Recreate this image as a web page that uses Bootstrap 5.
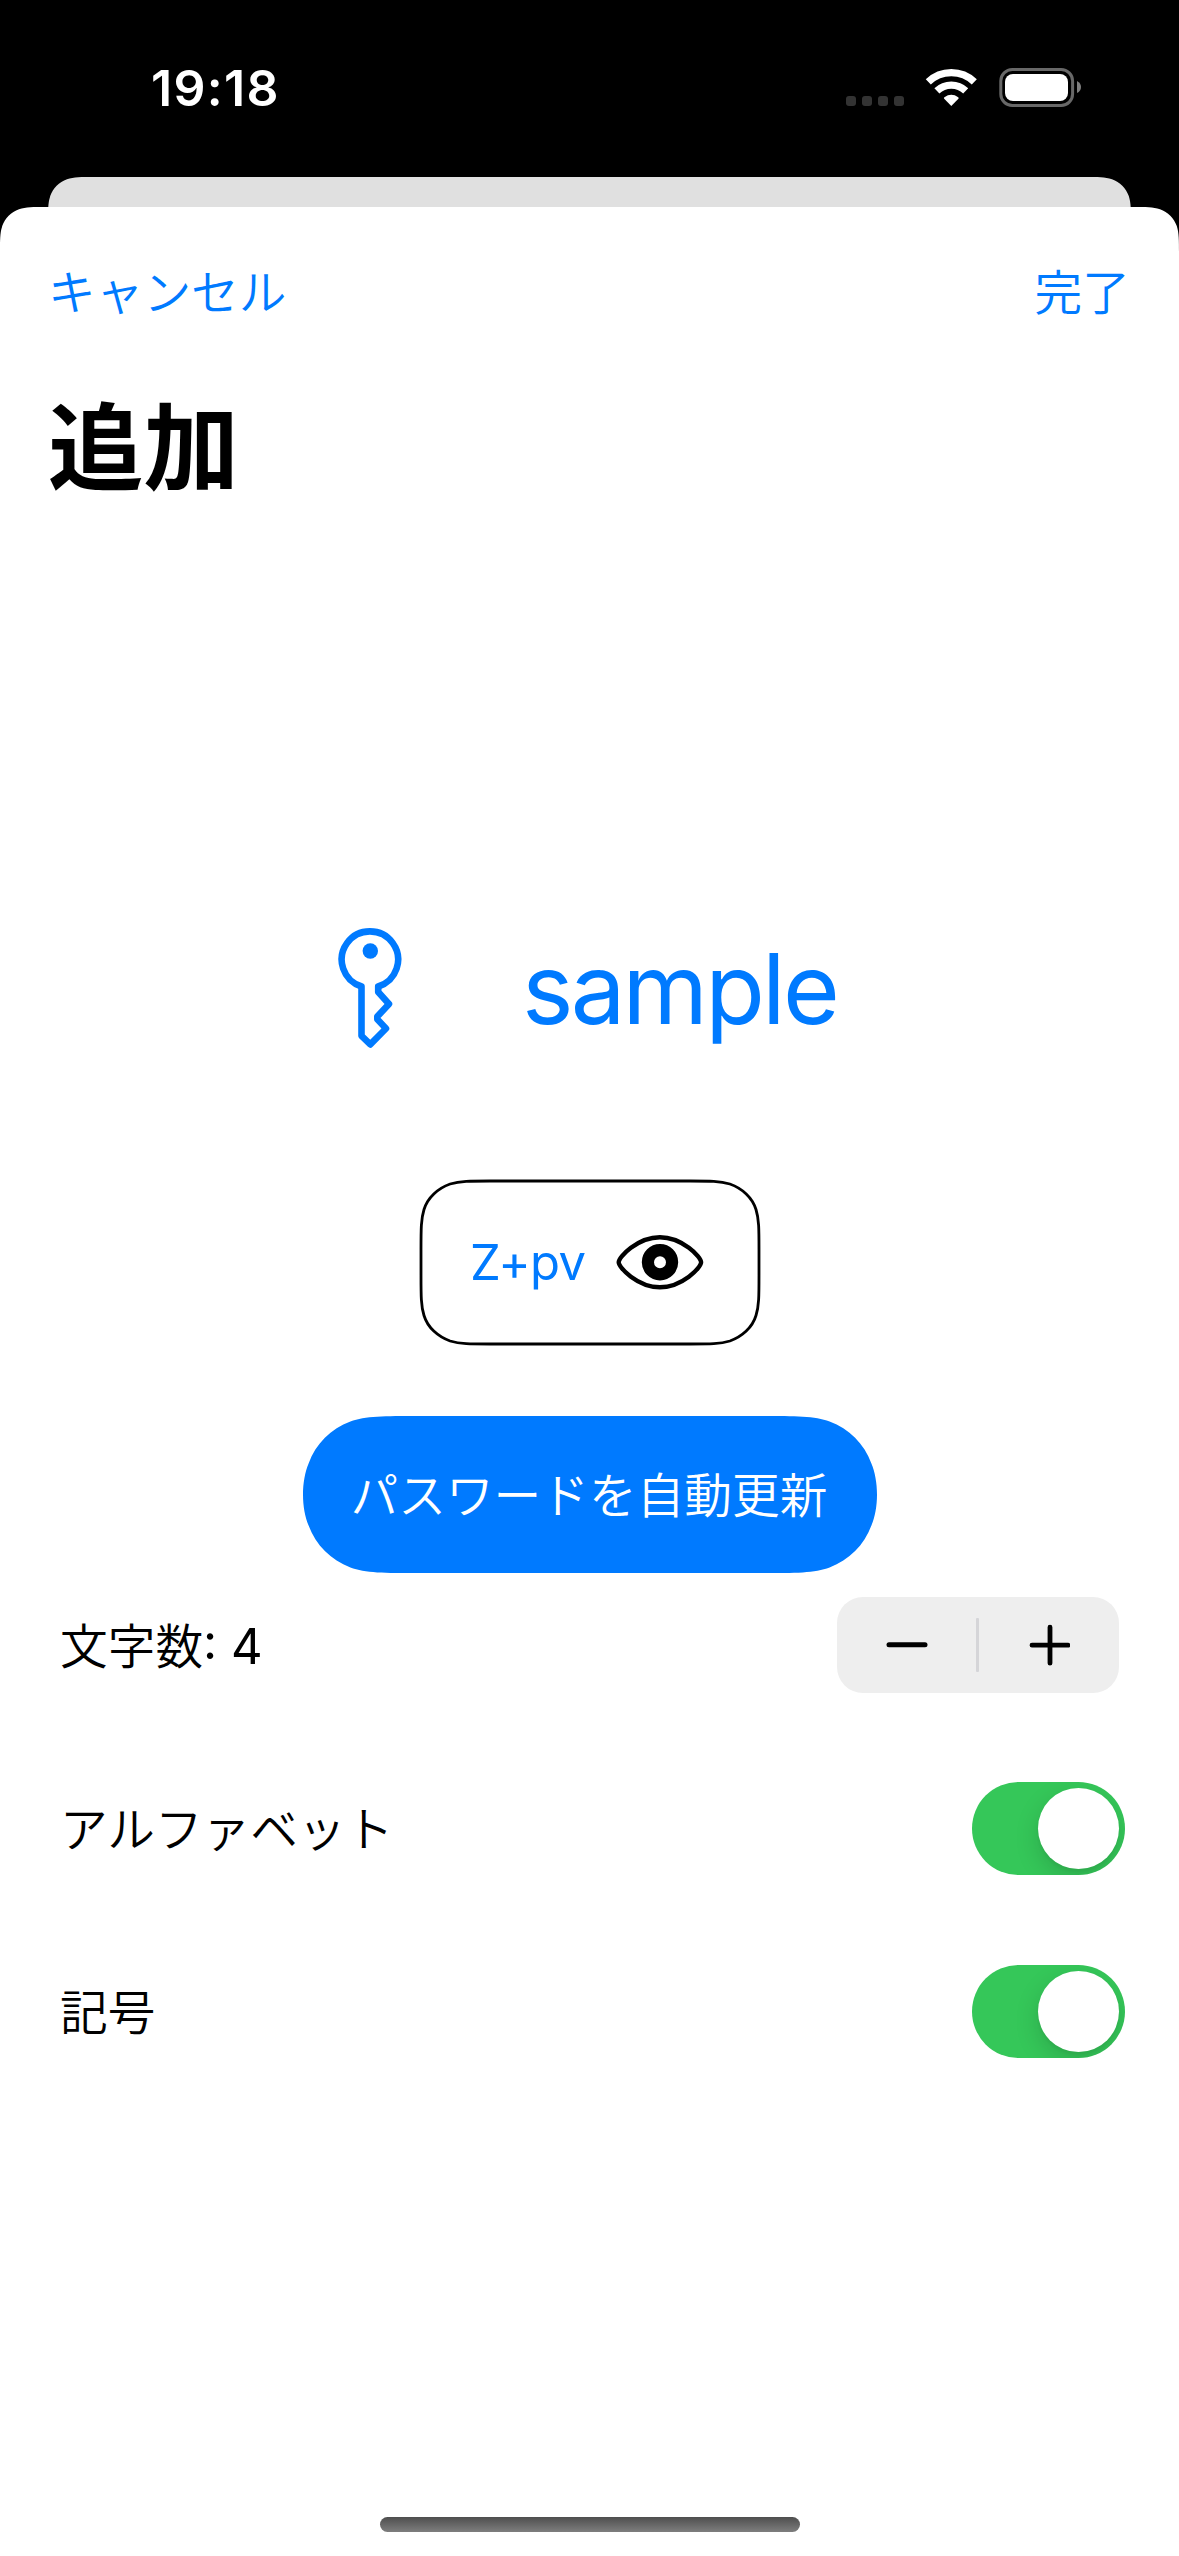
<!DOCTYPE html>
<html lang="ja">
<head>
<meta charset="utf-8">
<meta name="viewport" content="width=device-width, initial-scale=1">
<title>追加</title>
<link href="https://cdn.jsdelivr.net/npm/bootstrap@5.3.0/dist/css/bootstrap.min.css" rel="stylesheet">
<style>
  body { background: #000; color: #000; width: 1179px; height: 2556px; overflow: hidden;
    font-family: Inter, "Noto Sans CJK JP", sans-serif; font-size: 47.7px; line-height: 72px; font-weight: 350; }
  svg { display: block; flex: none; }
  .ios-blue { color: #007aff; }
  .status-bar { height: 177px; padding: 52px 98px 0 151px; color: #fff; }
  .clock { font-weight: 600; font-size: 50px; letter-spacing: 1.3px; }
  .status-icons { margin-top: 12px; }
  .back-sheet { height: 30px; margin: 0 48px; background: #e0e0e0;
    clip-path: path("M0 46 C0 33 0 26 2 20 L2.2 19 C5 11 11 5 19 2.2 C26 0 33 0 46 0 H1037 C1050 0 1057 0 1064 2.2 C1072 5 1078 11 1080.8 19 C1083 26 1083 33 1083 46 Z"); }
  .front-sheet { height: 2349px; background: #fff;
    clip-path: path("M0 46 C0 33 0 26 2 20 L2.2 19 C5 11 11 5 19 2.2 C26 0 33 0 46 0 H1133 C1146 0 1153 0 1160 2.2 C1168 5 1174 11 1176.8 19 C1179 26 1179 33 1179 46 V2349 H0 Z"); }
  .nav-row { height: 132px; padding: 50px 49px 0 48px; }
  .btn-plain { border: 0; background: none; padding: 0; color: #007aff; font-weight: 350; line-height: 72px; }
  .page-title { height: 587px; margin: 0; padding: 37px 0 0 48px; font-size: 95.5px; line-height: 144px; font-weight: 700; }
  .entry { height: 122px; padding-left: 335px; }
  .entry-name { font-size: 97.5px; line-height: 122px; font-weight: 400; margin-left: 117px; padding-top: 3px; letter-spacing: -2.8px; }
  .secret { width: 342px; height: 167px; margin: 131px auto 0 419px; padding: 0 56px 0 51px; }
  .secret-text { font-size: 49px; font-weight: 400; letter-spacing: -.6px; padding-top: 1px; }
  .secret-eye { margin-top: -2px; }
  .refresh { width: 574px; height: 157px; margin: 70px auto 0 303px; background: #007aff; color: #fff; border: 0; padding: 2px 2px 0 0; font-weight: 350;
    clip-path: path("M0 78.5 C0 67 2 56 5.6 47.4 C12.7 28 28 12.7 47.4 5.6 C62 0 82 0 114.6 0 H459.4 C492 0 512 0 526.6 5.6 C546 12.7 561.3 28 568.4 47.4 C572 56 574 67 574 78.5 C574 90 572 101 568.4 109.6 C561.3 129 546 144.3 526.6 151.4 C512 157 492 157 459.4 157 H114.6 C82 157 62 157 47.4 151.4 C28 144.3 12.7 129 5.6 109.6 C2 101 0 90 0 78.5 Z"); }
  .options { margin-top: 24px; padding: 0 54px 0 60px; }
  .opt-row { height: 96px; margin-bottom: 87px; }
  .opt-label { padding-top: 4px; }
  .digits { font-weight: 400; font-size: 49px; }
  .stepper { width: 282px; height: 96px; border-radius: 26px; background: #eee; margin-right: 6px; }
  .stepper .btn { width: 139px; border: 0; padding: 0; display: flex; align-items: center; justify-content: center; }
  .stepper-rule { width: 3px; height: 54px; background: #d5d5d8; border-radius: 1px; }
  .toggle { width: 153px; height: 93px; border-radius: 47px; background: #35c759; padding: 6px; overflow: hidden; }
  .knob { width: 81px; height: 81px; border-radius: 50%; background: #fff; box-shadow: 0 9px 24px rgba(0,0,0,.15), 0 3px 3px rgba(0,0,0,.04); }
  .home-bar { width: 420px; height: 15px; border-radius: 8px; margin: 0 auto 24px 380px; background: linear-gradient(#4e4e4e, #7e7e7e); }
</style>
</head>
<body>
<header class="status-bar d-flex justify-content-between align-items-start">
  <span class="clock">19:18</span>
  <svg class="status-icons" width="236" height="46" viewBox="845 64 236 46">
    <g fill="#333"><rect x="846" y="96" width="10" height="10" rx="3"/><rect x="862" y="96" width="10" height="10" rx="3"/><rect x="878" y="96" width="10" height="10" rx="3"/><rect x="894" y="96" width="10" height="10" rx="3"/></g>
    <g fill="none" stroke="#fff" stroke-width="7.3">
      <path d="M928.3 81.9A33.3 33.3 0 0 1 974.3 81.9"/>
      <path d="M936.9 90.9A20.9 20.9 0 0 1 965.7 90.9"/>
    </g>
    <path d="M951.3 106L944.2 98.8Q943.5 98 944.4 97.2A12 12 0 0 1 958.2 97.2Q959.1 98 958.4 98.8Z" fill="#fff"/>
    <rect x="1000.8" y="69.5" width="71.8" height="36" rx="11.5" fill="none" stroke="#686868" stroke-width="3"/>
    <rect x="1005" y="74" width="63" height="27" rx="8" fill="#fff"/>
    <path d="M1077 81Q1081 83 1081 87T1077 93Z" fill="#7f7f7f"/>
  </svg>
</header>
<div class="back-sheet"></div>
<main class="front-sheet d-flex flex-column">
  <nav class="nav-row d-flex justify-content-between align-items-start">
    <button class="btn-plain">キャンセル</button>
    <button class="btn-plain">完了</button>
  </nav>
  <h1 class="page-title">追加</h1>
  <section class="entry d-flex align-items-center ios-blue">
    <svg width="70" height="122" viewBox="335 925 70 122" fill="none" stroke="#007aff" stroke-width="6.6" stroke-linejoin="round" stroke-linecap="round">
      <path d="M378.2 985.5A28.2 28.2 0 1 0 361.6 985.5" stroke-linecap="butt"/>
      <path d="M361.5 985.5V1034.8L370.3 1043.4L386 1027.5L377.3 1018.2V1015.6L389 1003L378.2 991V985.5"/>
      <circle cx="370.3" cy="950" r="7.7" fill="#007aff" stroke="none"/>
    </svg>
    <span class="entry-name">sample</span>
  </section>
  <section class="secret d-flex align-items-center justify-content-between position-relative">
    <svg class="position-absolute top-0 start-0" width="342" height="167" viewBox="-1 -1 342 167" fill="none" stroke="#000" stroke-width="2.8">
      <path d="M69.8 1H270.2C290 1 300 1 309.9 4C322.2 8.4 332.4 17.6 336 29.5C339 39 339 49 339 69.8V95.2C339 116 339 126 336 135.5C332.4 147.4 322.2 156.6 309.9 161C300 164 290 164 270.2 164H69.8C50 164 40 164 30.1 161C17.8 156.6 7.6 147.4 4 135.5C1 126 1 116 1 95.2V69.8C1 49 1 39 4 29.5C7.6 17.6 17.8 8.4 30.1 4C40 1 50 1 69.8 1Z"/>
    </svg>
    <span class="secret-text ios-blue">Z+pv</span>
    <svg class="secret-eye" width="90" height="58" viewBox="615.5 1233 90 58">
      <path d="M619.2 1262.2C619.2 1257 638 1237.2 660.4 1237.2S701.6 1257 701.6 1262.2S682.8 1287.2 660.4 1287.2S619.2 1267.4 619.2 1262.2Z" fill="none" stroke="#000" stroke-width="4.4"/>
      <circle cx="660.5" cy="1262.2" r="12.1" fill="none" stroke="#000" stroke-width="12.2"/>
    </svg>
  </section>
  <button class="refresh">パスワードを自動更新</button>
  <section class="options">
    <div class="opt-row d-flex align-items-center justify-content-between">
      <span class="opt-label">文字数<span class="digits">: 4</span></span>
      <div class="stepper d-flex align-items-center">
        <button class="btn" aria-label="減らす"><svg width="42" height="42" viewBox="0 0 42 42" stroke="#000" stroke-width="5" stroke-linecap="round"><path d="M3 20.7H39"/></svg></button>
        <span class="stepper-rule"></span>
        <button class="btn" aria-label="増やす"><svg width="42" height="42" viewBox="0 0 42 42" stroke="#000" stroke-width="4.8" stroke-linecap="round"><path d="M4 21.2H40M22 3.2V39.2"/></svg></button>
      </div>
    </div>
    <div class="opt-row d-flex align-items-center justify-content-between">
      <span class="opt-label">アルファベット</span>
      <span class="toggle d-flex justify-content-end" role="switch" aria-checked="true"><span class="knob"></span></span>
    </div>
    <div class="opt-row d-flex align-items-center justify-content-between">
      <span class="opt-label">記号</span>
      <span class="toggle d-flex justify-content-end" role="switch" aria-checked="true"><span class="knob"></span></span>
    </div>
  </section>
  <div class="home-bar mt-auto"></div>
</main>
<script src="https://cdn.jsdelivr.net/npm/bootstrap@5.3.0/dist/js/bootstrap.bundle.min.js"></script>
</body>
</html>
